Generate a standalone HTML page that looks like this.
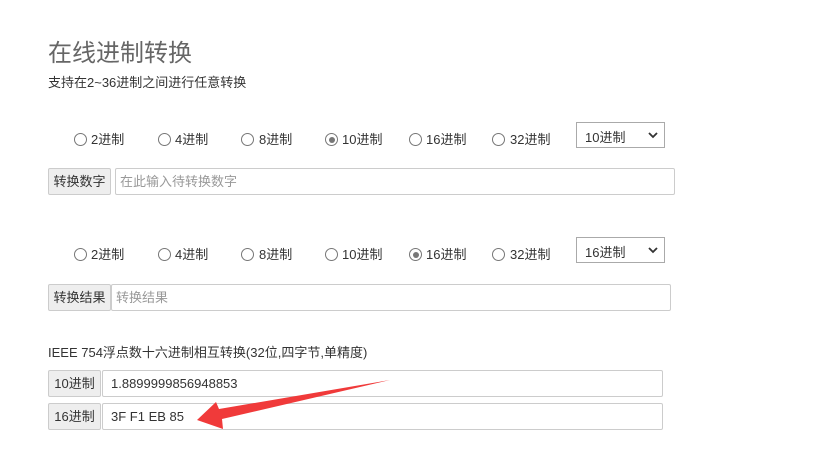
<!DOCTYPE html>
<html><head><meta charset="utf-8"><style>
body{margin:0;width:817px;height:470px;background:#fff;font-family:"Liberation Sans","Noto Sans CJK SC",sans-serif;color:#333;position:relative;overflow:hidden}
.a{position:absolute;white-space:nowrap}
.t{left:48px;top:33px;font-size:24px;color:#666}
.s{left:48px;top:72px;font-size:13px}
.r{position:absolute;width:13px;height:13px;border:1px solid #777;border-radius:50%;box-sizing:border-box;background:#fff}
.r.on::after{content:"";position:absolute;left:2.5px;top:2.5px;width:6px;height:6px;border-radius:50%;background:#777}
.lb{position:absolute;font-size:13px}
.sel{position:absolute;left:576px;width:89px;height:26px;border:1px solid #aaa;box-sizing:border-box;font-size:13px;padding:4px 0 0 8px}
.sel svg{position:absolute;right:6px;top:9px}
.ad{position:absolute;left:48px;height:27px;background:#eee;border:1px solid #ccc;box-sizing:border-box;font-size:13px;line-height:25px;text-align:center;border-radius:2px}
.in{position:absolute;height:27px;border:1px solid #ccc;box-sizing:border-box;font-size:13px;line-height:25px;padding-left:8px;border-radius:2px}
.ph{color:#999;padding-left:4px}
</style></head><body>
<div class="a t">在线进制转换</div>
<div class="a s">支持在2~36进制之间进行任意转换</div>

<div class="r" style="left:74px;top:133px"></div><div class="lb" style="left:91px;top:129px">2进制</div>
<div class="r" style="left:158px;top:133px"></div><div class="lb" style="left:175px;top:129px">4进制</div>
<div class="r" style="left:241px;top:133px"></div><div class="lb" style="left:259px;top:129px">8进制</div>
<div class="r on" style="left:325px;top:133px"></div><div class="lb" style="left:342px;top:129px">10进制</div>
<div class="r" style="left:409px;top:133px"></div><div class="lb" style="left:426px;top:129px">16进制</div>
<div class="r" style="left:492px;top:133px"></div><div class="lb" style="left:510px;top:129px">32进制</div>
<div class="sel" style="top:122px">10进制<svg width="10" height="7"><path d="M1 1L5 5L9 1" stroke="#333" stroke-width="1.8" fill="none"/></svg></div>
<div class="ad" style="top:168px;width:63px">转换数字</div>
<div class="in ph" style="top:168px;left:115px;width:560px">在此输入待转换数字</div>

<div class="r" style="left:74px;top:248px"></div><div class="lb" style="left:91px;top:244px">2进制</div>
<div class="r" style="left:158px;top:248px"></div><div class="lb" style="left:175px;top:244px">4进制</div>
<div class="r" style="left:241px;top:248px"></div><div class="lb" style="left:259px;top:244px">8进制</div>
<div class="r" style="left:325px;top:248px"></div><div class="lb" style="left:342px;top:244px">10进制</div>
<div class="r on" style="left:409px;top:248px"></div><div class="lb" style="left:426px;top:244px">16进制</div>
<div class="r" style="left:492px;top:248px"></div><div class="lb" style="left:510px;top:244px">32进制</div>
<div class="sel" style="top:237px">16进制<svg width="10" height="7"><path d="M1 1L5 5L9 1" stroke="#333" stroke-width="1.8" fill="none"/></svg></div>
<div class="ad" style="top:284px;width:63px">转换结果</div>
<div class="in ph" style="top:284px;left:111px;width:560px">转换结果</div>

<div class="a" style="left:48px;top:342px;font-size:13px">IEEE 754浮点数十六进制相互转换(32位,四字节,单精度)</div>
<div class="ad" style="top:370px;width:53px">10进制</div>
<div class="in" style="top:370px;left:102px;width:561px">1.8899999856948853</div>
<div class="ad" style="top:403px;width:53px">16进制</div>
<div class="in" style="top:403px;left:102px;width:561px">3F F1 EB 85</div>

<svg style="position:absolute;left:0;top:0" width="817" height="470"><polygon points="197,420 216,402 219,409 390,380 222,419 223,429" fill="#f03a3a"/></svg>
</body></html>
